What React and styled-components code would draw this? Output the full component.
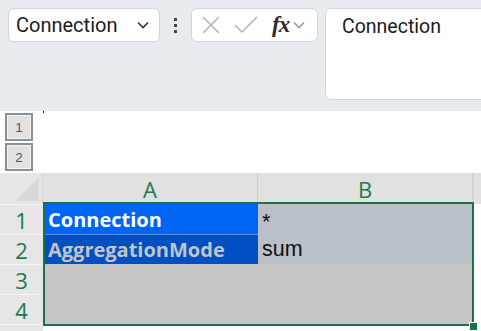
import React from "react";
import styled, { createGlobalStyle } from "styled-components";

const GlobalStyle = createGlobalStyle`
  html, body {
    margin: 0;
    padding: 0;
    background: #ffffff;
    overflow: hidden;
  }
  body {
    font-family: "Roboto", "Liberation Sans", sans-serif;
  }
`;

const Page = styled.div`
  width: 481px;
  height: 331px;
  overflow: hidden;
  display: flex;
  flex-direction: column;
`;

const Toolbar = styled.div`
  display: flex;
  align-items: flex-start;
  height: 111px;
  padding: 8px 0 0 8px;
  box-sizing: border-box;
  background: #e8ecf0;
  overflow: hidden;
`;

const Box = styled.div`
  display: flex;
  align-items: center;
  box-sizing: border-box;
  height: ${(p) => p.$h || 34}px;
  width: ${(p) => p.$w}px;
  flex-shrink: 0;
  background: #ffffff;
  border: 1px solid #d2d5d9;
  border-radius: 6px;
`;

const NameText = styled.span`
  flex: 1;
  padding-left: 7px;
  font-size: 20px;
  color: #1b1b1b;
`;

const Dots = styled.div`
  display: flex;
  flex-direction: column;
  justify-content: center;
  gap: 3px;
  width: 31px;
  height: 34px;
  align-items: center;
  flex-shrink: 0;
`;

const Dot = styled.span`
  width: 3px;
  height: 3px;
  background: #444;
`;

const FxText = styled.span`
  font-family: "Liberation Serif", "DejaVu Serif", serif;
  font-style: italic;
  font-weight: bold;
  font-size: 23px;
  color: #2b2b2b;
  margin-left: 14px;
  letter-spacing: -1px;
`;

const FormulaText = styled.div`
  align-self: flex-start;
  padding: 6px 0 0 16px;
  font-size: 19.5px;
  color: #1b1b1b;
`;

const OutlineArea = styled.div`
  position: relative;
  height: 62px;
  display: flex;
  flex-direction: column;
  gap: 2px;
  padding: 2px 0 0 5px;
  box-sizing: border-box;
`;

const OutlineButton = styled.div`
  width: 28px;
  height: 28px;
  box-sizing: border-box;
  border: 2px solid #8c9096;
  background: #e2e2e2;
  display: flex;
  align-items: center;
  justify-content: center;
  font-family: "Liberation Sans", sans-serif;
  font-size: 13.5px;
  color: #555;
  box-shadow: inset 0 0 0 1px #f4f4f4;
`;

const Speck = styled.span`
  position: absolute;
  left: 43px;
  top: 0;
  width: 1px;
  height: 2px;
  background: #111;
`;

const Sheet = styled.div`
  position: relative;
  display: grid;
  grid-template-columns: 43px 215px 215px 8px;
  grid-template-rows: 31px repeat(4, 30px) 7px;
  background: #ffffff;
`;

const Corner = styled.div`
  position: relative;
  background: #e6e6e6;
  border-right: 1px solid #d4d4d4;
  overflow: hidden;
`;

const CornerTriangle = styled.div`
  position: absolute;
  right: 3px;
  bottom: 3px;
  width: 0;
  height: 0;
  border-left: 24px solid transparent;
  border-bottom: 24px solid #d8d8d8;
`;

const ColHeader = styled.div`
  background: #e1e1e1;
  border-right: 1px solid #cfcfcf;
  display: flex;
  align-items: center;
  justify-content: center;
  font-family: "Open Sans", "Liberation Sans", sans-serif;
  font-size: 22px;
  color: #1d7a4a;
`;

const RowHeader = styled.div`
  background: #e6e6e6;
  border-top: 1px solid #f4f4f4;
  display: flex;
  align-items: center;
  justify-content: center;
  font-family: "Open Sans", "Liberation Sans", sans-serif;
  font-size: 22px;
  color: #1d7a4a;
`;

const Cell = styled.div`
  display: flex;
  align-items: center;
  padding-left: ${(p) => (p.$bold ? 5 : 4)}px;
  background: ${(p) => p.$bg};
  color: ${(p) => p.$fg || "#111"};
  border-top: 1px solid ${(p) => p.$line || "transparent"};
  font-family: ${(p) =>
    p.$bold ? '"Open Sans", "Noto Sans", sans-serif' : '"Liberation Sans", sans-serif'};
  font-weight: ${(p) => (p.$bold ? 700 : 400)};
  font-size: ${(p) => (p.$bold ? 20 : 21.5)}px;
  white-space: nowrap;
  overflow: hidden;
`;

const Filler = styled.div`
  background: ${(p) => p.$bg || "#ffffff"};
  border-left: 1px solid #d4d4d4;
`;

const Selection = styled.div`
  position: absolute;
  left: 43px;
  top: 29px;
  width: 431px;
  height: 124px;
  box-sizing: border-box;
  border: 2px solid #1e7145;
  pointer-events: none;
`;

const Handle = styled.div`
  position: absolute;
  left: 469px;
  top: 149px;
  width: 7px;
  height: 7px;
  background: #1e7145;
  border: 1px solid #fff;
`;

const Chevron = ({ color, size = 14 }) => (
  <svg width={size} height={size} viewBox="0 0 14 14" fill="none">
    <path d="M2 4.5 L7 9.5 L12 4.5" stroke={color} strokeWidth="1.6" />
  </svg>
);

const rows = [
  { n: 1, a: "Connection", b: "*", aBg: "#0064f5", aFg: "#ffffff", bBg: "#b9c0c8" },
  { n: 2, a: "AggregationMode", b: "sum", aBg: "#0050c4", aFg: "#c4c4c8", bBg: "#b9c0c8" },
  { n: 3, a: "", b: "", aBg: "#c6c6c6", bBg: "#c6c6c6" },
  { n: 4, a: "", b: "", aBg: "#c6c6c6", bBg: "#c6c6c6" },
];

export default function App() {
  return (
    <Page>
      <GlobalStyle />
      <Toolbar>
        <Box $w={152}>
          <NameText>Connection</NameText>
          <span style={{ marginRight: 9, display: "flex" }}>
            <Chevron color="#333" />
          </span>
        </Box>
        <Dots>
          <Dot />
          <Dot />
          <Dot />
        </Dots>
        <Box $w={127}>
          <svg width="20" height="20" viewBox="0 0 20 20" style={{ marginLeft: 9 }}>
            <path d="M2 2 L18 18 M18 2 L2 18" stroke="#b4b4b4" strokeWidth="1.5" />
          </svg>
          <svg width="24" height="20" viewBox="0 0 24 20" style={{ marginLeft: 13 }}>
            <path d="M1 10 L8 17 L23 2" stroke="#b4b4b4" strokeWidth="1.5" fill="none" />
          </svg>
          <FxText>fx</FxText>
          <span style={{ marginLeft: 3, display: "flex" }}>
            <Chevron color="#9a9a9a" />
          </span>
        </Box>
        <Box $w={180} $h={92} style={{ marginLeft: 7 }}>
          <FormulaText>Connection</FormulaText>
        </Box>
      </Toolbar>

      <OutlineArea>
        <Speck />
        <OutlineButton>1</OutlineButton>
        <OutlineButton>2</OutlineButton>
      </OutlineArea>

      <Sheet>
        <Corner>
          <CornerTriangle />
        </Corner>
        <ColHeader>A</ColHeader>
        <ColHeader>B</ColHeader>
        <Filler $bg="#e1e1e1" />
        {rows.map((r) => (
          <React.Fragment key={r.n}>
            <RowHeader>{r.n}</RowHeader>
            <Cell $bg={r.aBg} $fg={r.aFg} $bold $line={r.n === 2 ? "#5a8fe0" : undefined}>
              {r.a}
            </Cell>
            <Cell $bg={r.bBg} style={{ paddingTop: r.n === 1 ? 6 : 0 }}>
              {r.b}
            </Cell>
            <Filler />
          </React.Fragment>
        ))}
        <RowHeader />
        <Filler style={{ borderLeft: "none" }} />
        <Filler style={{ borderLeft: "none" }} />
        <Filler />
        <Selection />
        <Handle />
      </Sheet>
    </Page>
  );
}
